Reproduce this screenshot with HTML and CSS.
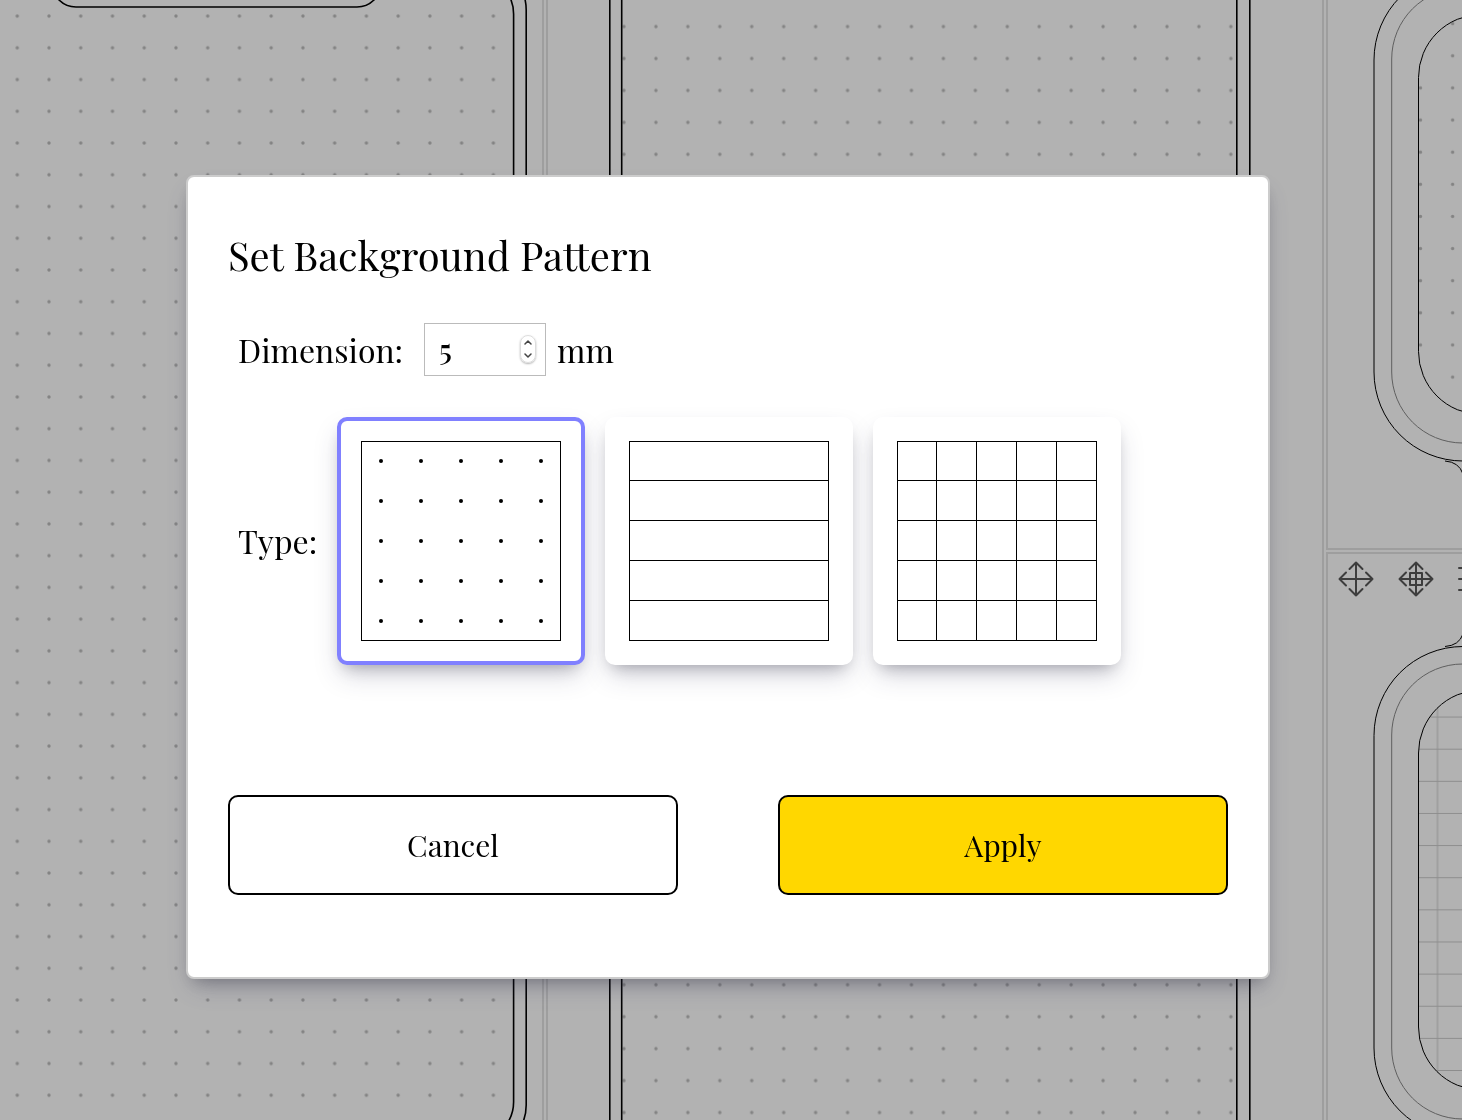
FILE: index.html
```html
<!DOCTYPE html>
<html lang="en">
<head>
  <meta charset="utf-8">
  <meta name="viewport" content="width=device-width, initial-scale=1">
  <title>Set Background Pattern</title>
  <link rel="stylesheet" href="styles.css">
</head>
<body>
  <svg class="canvas" aria-hidden="true">
    <defs>
      <pattern id="dots-left" patternUnits="userSpaceOnUse" x="1.4" y="0.2" width="31.74" height="31.74">
        <circle class="dot" cx="15.87" cy="15.87" r="1.7"/>
      </pattern>
      <pattern id="dots-middle" patternUnits="userSpaceOnUse" x="608" y="10.6" width="31.94" height="31.94">
        <circle class="dot" cx="16" cy="16" r="1.7"/>
      </pattern>
      <pattern id="dots-right" patternUnits="userSpaceOnUse" x="1404.5" y="7.6" width="32.13" height="32.13">
        <circle class="dot" cx="16" cy="16" r="1.7"/>
      </pattern>
      <pattern id="grid-right" patternUnits="userSpaceOnUse" x="1421.5" y="701" width="80" height="32.13">
        <path class="rule" d="M0 16H80M16 0V33"/>
      </pattern>
    </defs>

    <g class="cell">
      <path d="M543 0V4000M547 0V4000M1323 0V4000"/>
      <path d="M1327 0V549H4000M1327 4000V553H4000"/>
    </g>

    <rect x="2" y="0" width="507" height="4000" fill="url(#dots-left)"/>
    <rect class="page filled" x="52" y="-60" width="329" height="67" rx="24"/>
    <rect class="page" x="-200" y="-24" width="713.6" height="1164" rx="38"/>
    <rect class="page" x="-200" y="-35" width="726.2" height="1185" rx="45"/>

    <rect x="621" y="0" width="616" height="4000" fill="url(#dots-middle)"/>
    <path class="page" d="M609.8 0V4000M621.7 0V4000M1236.8 0V4000M1249.8 0V4000"/>

    <rect class="thin" x="1374" y="-29" width="700" height="490" rx="89"/>
    <rect class="thin soft" x="1391.7" y="-12" width="660" height="455" rx="71"/>
    <rect class="thin" x="1418.5" y="14.5" width="600" height="400" rx="63" fill="url(#dots-right)"/>
    <path class="thin" d="M1445 461Q1459 462 1463 474M1445 646.5Q1459 645.5 1463 634"/>
    <rect class="thin" x="1374" y="646.5" width="700" height="490.5" rx="89"/>
    <rect class="thin soft" x="1391.7" y="664" width="660" height="455" rx="71"/>
    <rect class="thin" x="1418.5" y="690" width="600" height="400" rx="63" fill="url(#grid-right)"/>

    <g class="tool">
      <path d="M1339.5 579H1372.5M1356 562.5V595.5M1349.5 569L1356 562.5L1362.5 569M1349.5 589L1356 595.5L1362.5 589M1346 572.5L1339.5 579L1346 585.5M1366 572.5L1372.5 579L1366 585.5"/>
      <path d="M1399.5 579H1432.5M1416 562.5V595.5M1409.5 569L1416 562.5L1422.5 569M1409.5 589L1416 595.5L1422.5 589M1406 572.5L1399.5 579L1406 585.5M1426 572.5L1432.5 579L1426 585.5M1410 573H1422V585H1410Z"/>
      <path d="M1459 568H1490M1459 579H1490M1459 590H1490"/>
    </g>
  </svg>

  <div class="overlay">
    <form class="dialog" role="dialog" aria-labelledby="dialog-title">
      <h1 class="title" id="dialog-title">Set Background Pattern</h1>

      <div class="field">
        <label class="field-label" for="dimension">Dimension:</label>
        <div class="number">
          <input class="number-input" id="dimension" type="number" value="5" min="1">
          <div class="stepper">
            <button class="step" type="button" aria-label="Increase">
              <svg width="8" height="5" viewBox="0 0 8 5"><path d="M1 4L4 1L7 4"/></svg>
            </button>
            <button class="step" type="button" aria-label="Decrease">
              <svg width="8" height="5" viewBox="0 0 8 5"><path d="M1 1L4 4L7 1"/></svg>
            </button>
          </div>
        </div>
        <span class="unit">mm</span>
      </div>

      <div class="field field-type" role="radiogroup" aria-labelledby="type-label">
        <span class="field-label type-label" id="type-label">Type:</span>
        <div class="options">
          <label class="option">
            <input class="option-input" type="radio" name="type" value="dots" aria-label="Dots" checked>
            <svg class="preview" viewBox="0 0 200 200">
              <defs>
                <pattern id="preview-dots" patternUnits="userSpaceOnUse" width="40" height="40">
                  <circle cx="20" cy="20" r="2"/>
                </pattern>
              </defs>
              <rect class="preview-frame" x="0.5" y="0.5" width="199" height="199"/>
              <rect width="200" height="200" fill="url(#preview-dots)"/>
            </svg>
          </label>
          <label class="option">
            <input class="option-input" type="radio" name="type" value="lines" aria-label="Lines">
            <svg class="preview" viewBox="0 0 200 200">
              <rect class="preview-frame" x="0.5" y="0.5" width="199" height="199"/>
              <path class="preview-frame" d="M0 39.5H200M0 79.5H200M0 119.5H200M0 159.5H200"/>
            </svg>
          </label>
          <label class="option">
            <input class="option-input" type="radio" name="type" value="grid" aria-label="Grid">
            <svg class="preview" viewBox="0 0 200 200">
              <rect class="preview-frame" x="0.5" y="0.5" width="199" height="199"/>
              <path class="preview-frame" d="M0 39.5H200M0 79.5H200M0 119.5H200M0 159.5H200M39.5 0V200M79.5 0V200M119.5 0V200M159.5 0V200"/>
            </svg>
          </label>
        </div>
      </div>

      <div class="actions">
        <button class="button" type="button">Cancel</button>
        <button class="button button-primary" type="submit">Apply</button>
      </div>
    </form>
  </div>
</body>
</html>
```
FILE: styles.css
```css
* {
  box-sizing: border-box;
}

body {
  margin: 0;
  min-height: 100vh;
  background: #fff;
  color: #000;
  font-family: "Playfair Display", "Liberation Serif", serif;
}

/* Page canvas behind the dialog */
.canvas {
  position: fixed;
  inset: 0;
  width: 100%;
  height: 100%;
}

.dot {
  fill: #bcbcbc;
}

.rule {
  fill: none;
  stroke: #cbcbcb;
}

.cell {
  fill: none;
  stroke: #e3e3e3;
  stroke-width: 2;
}

.page,
.thin {
  stroke: #000;
  stroke-width: 1.6;
}

.page,
.thin:not([fill]) {
  fill: none;
}

.page.filled {
  fill: #fff;
}

.thin {
  stroke-width: 1;
}

.thin.soft {
  stroke: #888;
}

.tool {
  fill: none;
  stroke: #585858;
  stroke-width: 2;
  stroke-linecap: round;
  stroke-linejoin: round;
}

/* Dialog */
.overlay {
  position: relative;
  min-height: 100vh;
  padding: 175px 192px 140px 186px;
  background: rgba(0, 0, 0, 0.3);
}

.dialog {
  padding: 52px 40px 82px;
  border: 2px solid #ccc;
  border-radius: 8px;
  background: #fff;
  box-shadow: 0 13px 27px -5px rgba(50, 50, 93, 0.25), 0 8px 16px -8px rgba(0, 0, 0, 0.3);
}

.title {
  margin: 0 0 42px;
  font-size: 40px;
  font-weight: 400;
  line-height: 52px;
}

.field {
  display: flex;
  align-items: center;
  padding-left: 10px;
  font-size: 32px;
  line-height: 40px;
}

.field-type {
  margin-top: 41px;
}

.field-label {
  flex: none;
  width: 186px;
}

.type-label {
  width: 99px;
}

.number {
  display: flex;
  align-items: center;
  width: 122px;
  height: 53px;
  padding: 0 9px 2px 14px;
  border: 1px solid #bbb;
}

.number-input {
  flex: 1;
  min-width: 0;
  padding: 0;
  border: 0;
  outline: 0;
  background: none;
  color: inherit;
  font: inherit;
  font-size: 30px;
  font-weight: 500;
  appearance: textfield;
}

.number-input::-webkit-inner-spin-button {
  appearance: none;
}

.stepper {
  display: flex;
  flex-direction: column;
  width: 16px;
  height: 28px;
  border: 1px solid #ddd;
  border-radius: 8px;
  box-shadow: 0 1px 2px rgba(0, 0, 0, 0.3);
}

.step {
  display: flex;
  flex: 1;
  align-items: center;
  justify-content: center;
  padding: 0;
  border: 0;
  background: none;
}

.step path {
  fill: none;
  stroke: #444;
  stroke-width: 1.5;
  stroke-linecap: round;
  stroke-linejoin: round;
}

.unit {
  padding-left: 11px;
}

.options {
  display: flex;
  gap: 20px;
}

.option {
  position: relative;
  width: 248px;
  padding: 20px;
  border: 4px solid #fff;
  border-radius: 10px;
  background: #fff;
  box-shadow: 0 13px 27px -5px rgba(50, 50, 93, 0.25), 0 8px 16px -8px rgba(0, 0, 0, 0.3);
}

.option:has(:checked) {
  border-color: #8080ff;
}

.option-input {
  position: absolute;
  opacity: 0;
}

.preview {
  display: block;
  width: 200px;
  height: 200px;
}

.preview-frame {
  fill: none;
  stroke: #000;
}

.actions {
  display: grid;
  grid-template-columns: 1fr 1fr;
  gap: 100px;
  margin-top: 130px;
}

.button {
  height: 100px;
  padding: 0;
  border: 2px solid #000;
  border-radius: 10px;
  background: #fff;
  color: inherit;
  font: inherit;
  font-size: 30px;
}

.button-primary {
  background: #ffd700;
}
```
